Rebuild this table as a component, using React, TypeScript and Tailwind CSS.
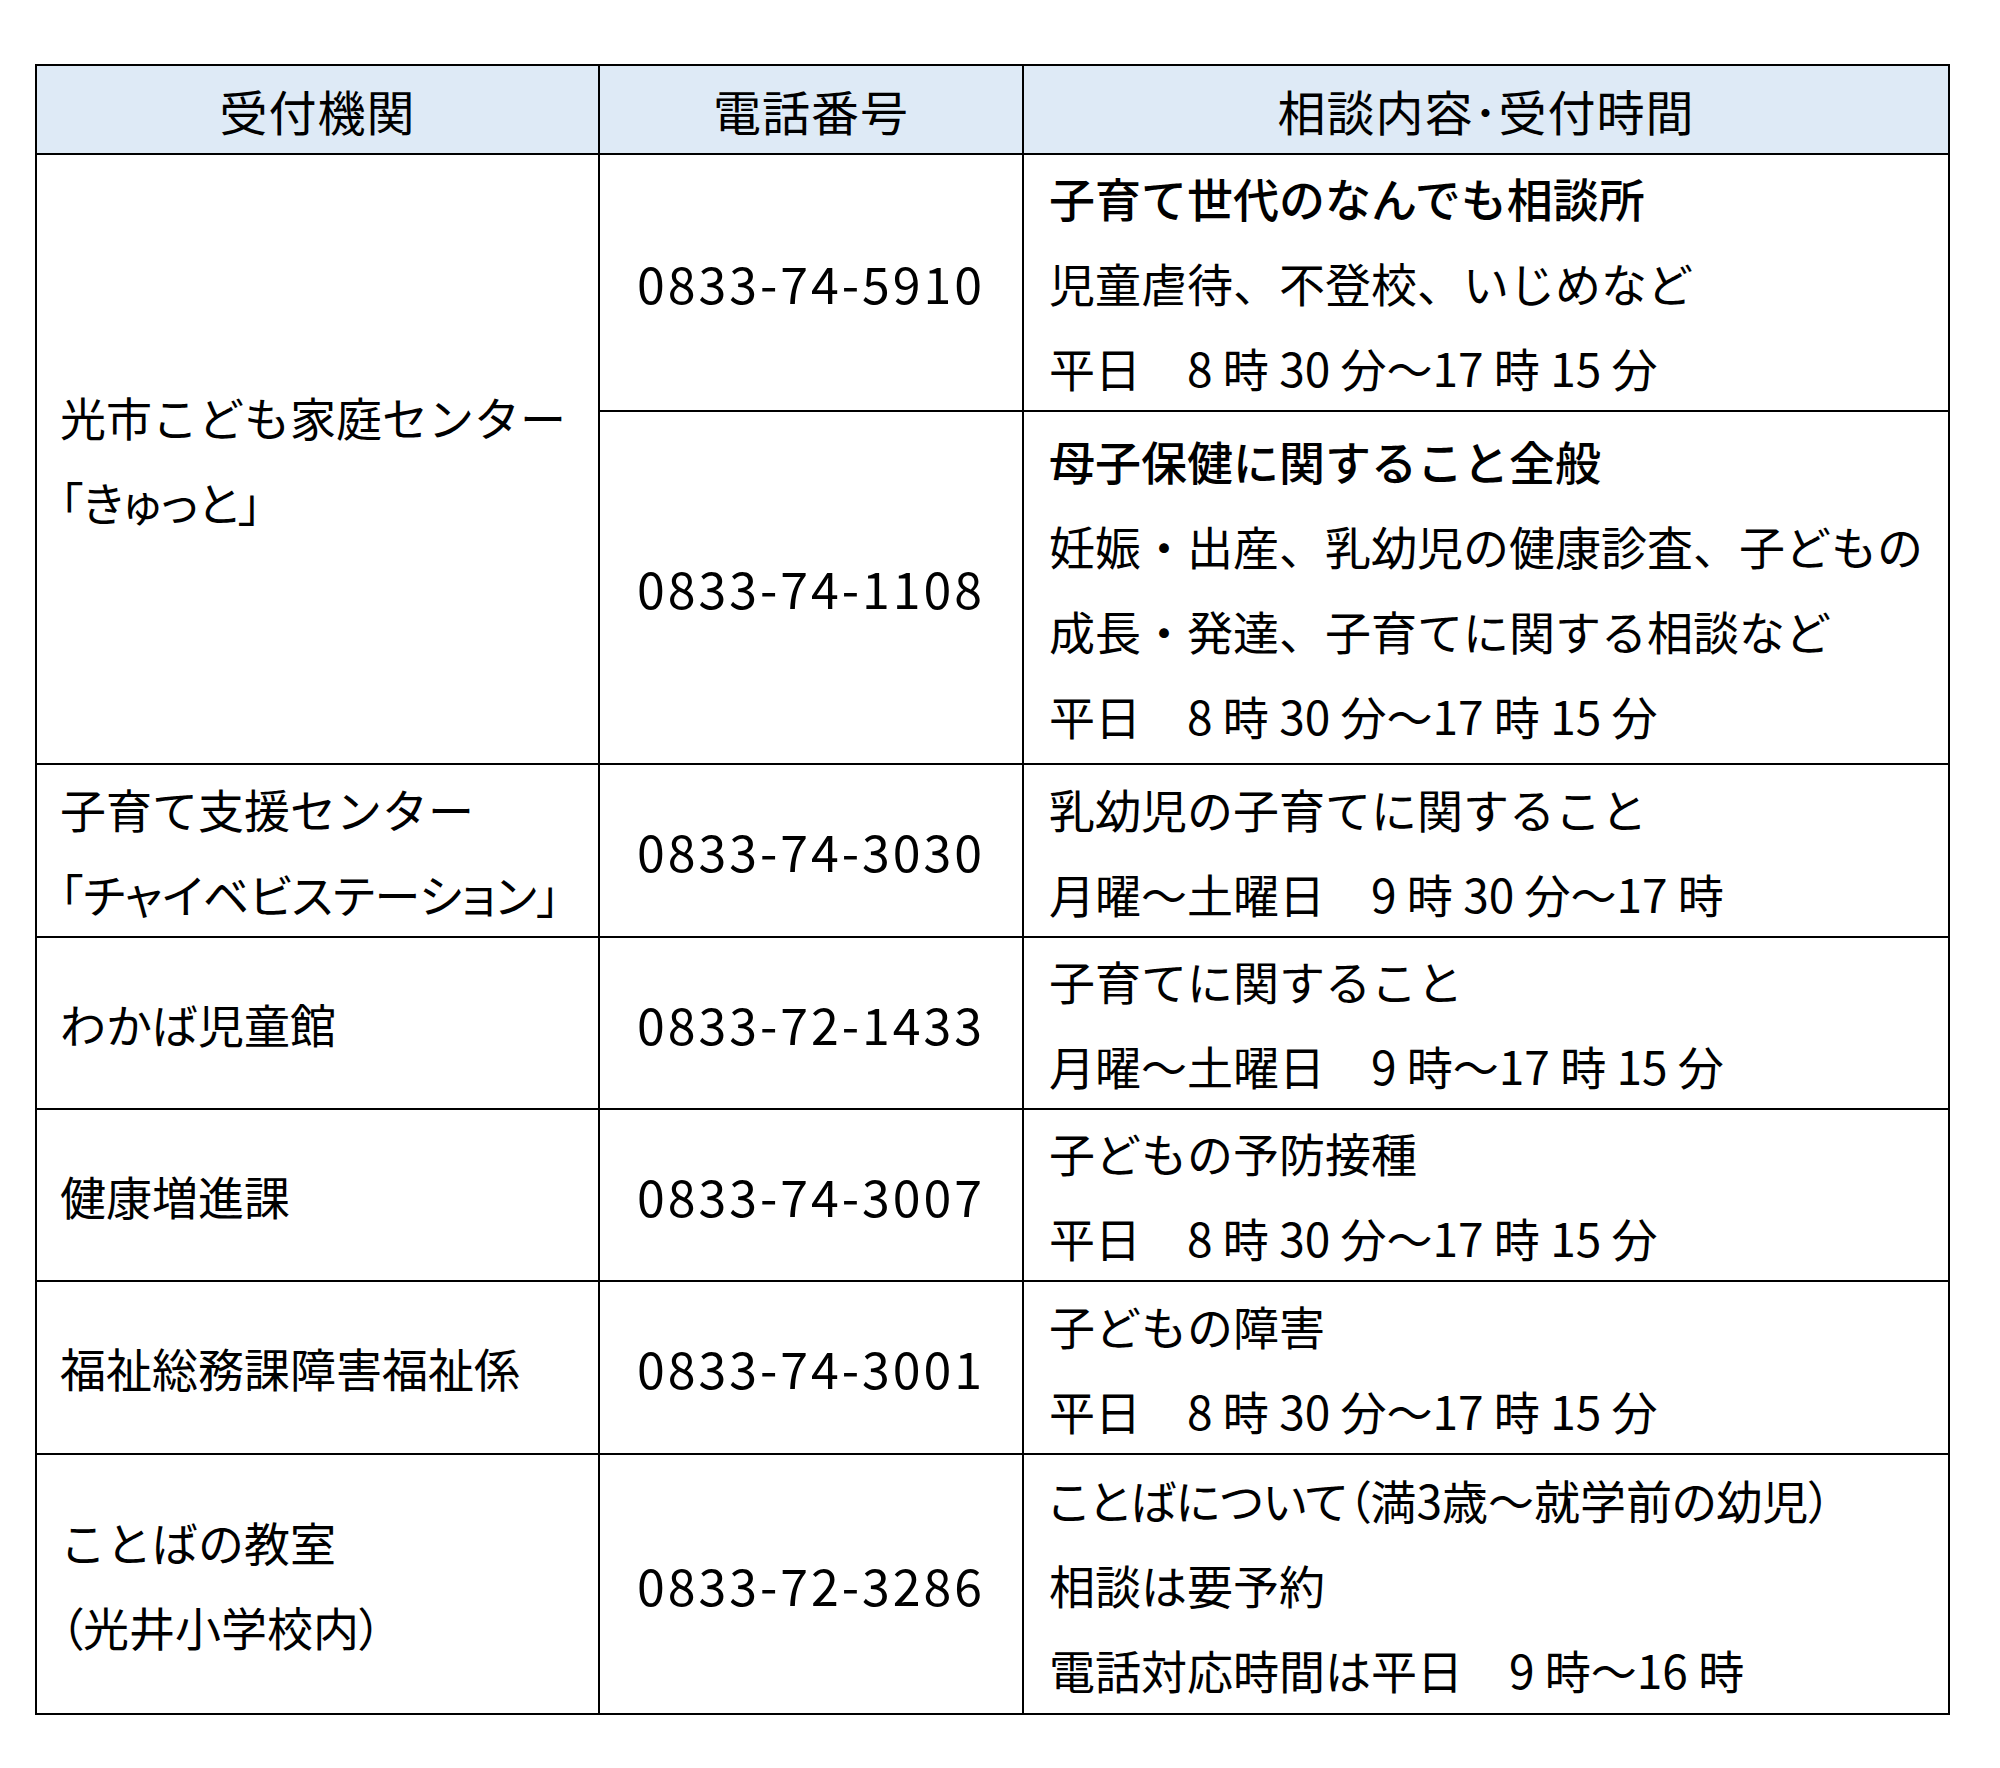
const jp = "font-['Noto_Sans_CJK_JP','Noto_Sans',sans-serif]";
const palt = "[font-feature-settings:'palt']";

type Line = { text: string; bold?: boolean; tight?: boolean };
type Row = {
  org: Line[];
  subs: { phone: string; lines: Line[]; h: string }[];
};

const rows: Row[] = [
  {
    org: [{ text: "光市こども家庭センター" }, { text: "「きゅっと」", tight: true }],
    subs: [
      {
        phone: "0833-74-5910",
        h: "h-[256px]",
        lines: [
          { text: "子育て世代のなんでも相談所", bold: true },
          { text: "児童虐待、不登校、いじめなど" },
          { text: "平日　8 時 30 分～17 時 15 分" },
        ],
      },
      {
        phone: "0833-74-1108",
        h: "h-[353px]",
        lines: [
          { text: "母子保健に関すること全般", bold: true },
          { text: "妊娠・出産、乳幼児の健康診査、子どもの" },
          { text: "成長・発達、子育てに関する相談など" },
          { text: "平日　8 時 30 分～17 時 15 分" },
        ],
      },
    ],
  },
  {
    org: [{ text: "子育て支援センター" }, { text: "「チャイベビステーション」", tight: true }],
    subs: [
      {
        phone: "0833-74-3030",
        h: "h-[173px]",
        lines: [{ text: "乳幼児の子育てに関すること" }, { text: "月曜～土曜日　9 時 30 分～17 時" }],
      },
    ],
  },
  {
    org: [{ text: "わかば児童館" }],
    subs: [
      {
        phone: "0833-72-1433",
        h: "h-[170px]",
        lines: [{ text: "子育てに関すること" }, { text: "月曜～土曜日　9 時～17 時 15 分" }],
      },
    ],
  },
  {
    org: [{ text: "健康増進課" }],
    subs: [
      {
        phone: "0833-74-3007",
        h: "h-[171px]",
        lines: [{ text: "子どもの予防接種" }, { text: "平日　8 時 30 分～17 時 15 分" }],
      },
    ],
  },
  {
    org: [{ text: "福祉総務課障害福祉係" }],
    subs: [
      {
        phone: "0833-74-3001",
        h: "h-[173px]",
        lines: [{ text: "子どもの障害" }, { text: "平日　8 時 30 分～17 時 15 分" }],
      },
    ],
  },
  {
    org: [{ text: "ことばの教室" }, { text: "（光井小学校内）", tight: true }],
    subs: [
      {
        phone: "0833-72-3286",
        h: "h-[260px]",
        lines: [
          { text: "ことばについて（満3歳～就学前の幼児）", tight: true },
          { text: "相談は要予約" },
          { text: "電話対応時間は平日　9 時～16 時" },
        ],
      },
    ],
  },
];

const cell = "border-2 border-black align-middle";

function Lines({ lines }: { lines: Line[] }) {
  return (
    <>
      {lines.map((l) => (
        <div
          key={l.text}
          className={`whitespace-nowrap ${l.bold ? "font-medium" : ""} ${l.tight ? palt : ""}`}
        >
          {l.text}
        </div>
      ))}
    </>
  );
}

export default function App() {
  return (
    <div className={`min-h-[1768px] w-[2000px] bg-white pt-[64px] pl-[35px] text-black ${jp}`}>
      <table className="w-[1913px] table-fixed border-collapse">
        <colgroup>
          <col className="w-[563px]" />
          <col className="w-[424px]" />
          <col className="w-[926px]" />
        </colgroup>
        <thead>
          <tr className="h-[89px] bg-[#deeaf6] text-[48px] tracking-[1px]">
            <th className={`${cell} font-normal`}>受付機関</th>
            <th className={`${cell} font-normal`}>電話番号</th>
            <th className={`${cell} font-normal`}>相談内容･受付時間</th>
          </tr>
        </thead>
        <tbody>
          {rows.map((row) =>
            row.subs.map((sub, i) => (
              <tr key={sub.phone} className={sub.h}>
                {i === 0 && (
                  <td rowSpan={row.subs.length} className={`${cell} pl-[23px] text-[46px] leading-[85px]`}>
                    <Lines lines={row.org} />
                  </td>
                )}
                <td className={`${cell} text-center text-[50px] tracking-[3px]`}>{sub.phone}</td>
                <td className={`${cell} pl-[25px] text-[46px] leading-[85px]`}>
                  <Lines lines={sub.lines} />
                </td>
              </tr>
            ))
          )}
        </tbody>
      </table>
    </div>
  );
}
